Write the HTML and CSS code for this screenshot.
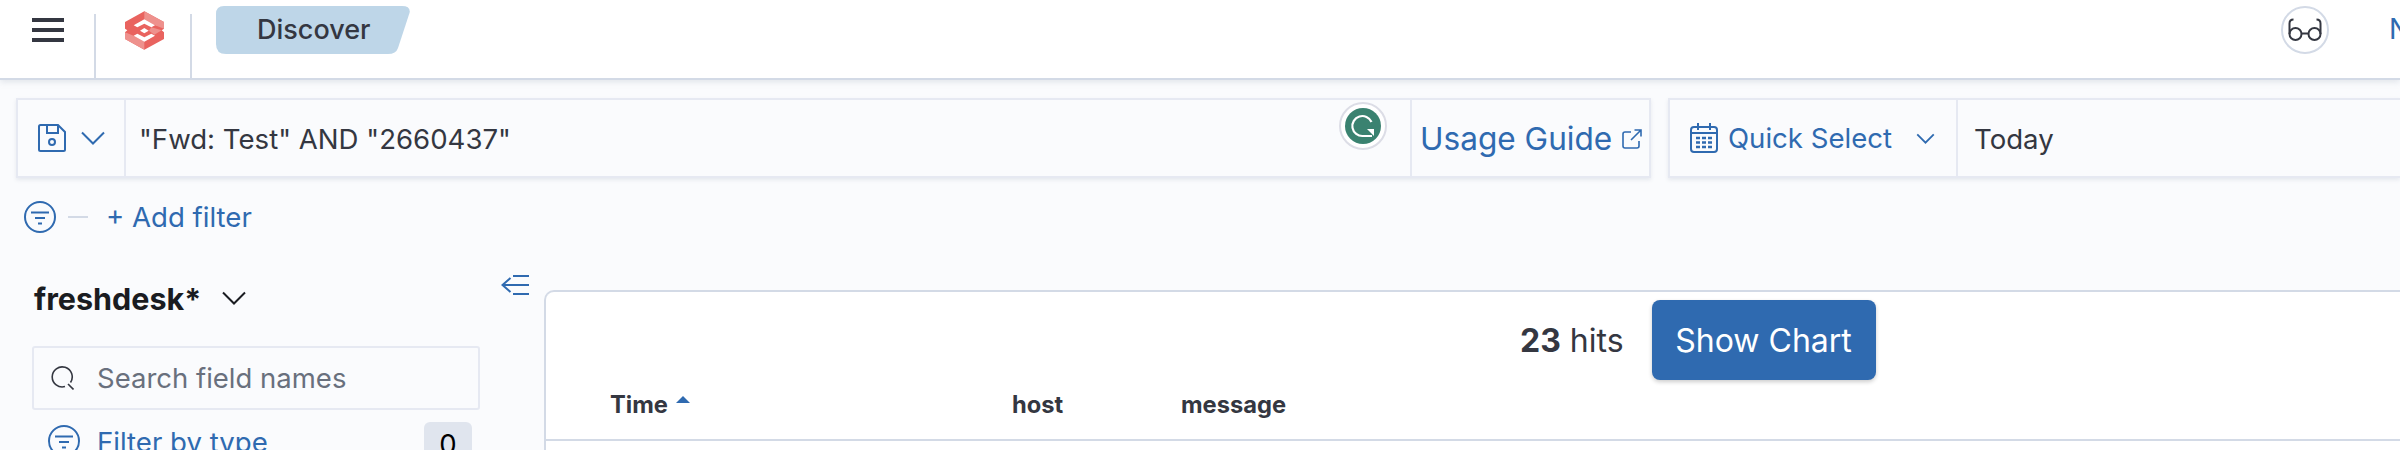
FILE: index.html
```html
<!DOCTYPE html>
<html lang="en">

<head>
    <meta charset="UTF-8">
    <meta name="viewport" content="width=device-width, initial-scale=1.0">
    <title>Discover</title>
    <link rel="stylesheet" href="styles.css">
</head>

<body>
    <header class="topbar">
        <div class="nav-cell">
            <div class="burger"><span></span><span></span><span></span></div>
        </div>
        <div class="logo-cell">
            <svg class="logo" viewBox="0 0 117 115">
                <path fill="#e9635f" d="M58 0 117 32V52L110 57 117 63V83L58 115 0 83V63L7 57 0 52V32Z"/>
                <path fill="#ee918d" d="M58 0 117 32V52L90 42 58 24Z"/>
                <path fill="#ee918d" d="M0 63 26 73 58 91V115L0 83Z"/>
                <path fill="#ee918d" d="M79 48 110 57 88 70 72 58Z"/>
                <path fill="#fff" d="M58 24 90 42 79 48 58 37 37 48 26 42Z"/>
                <path fill="#fff" d="M58 91 90 73 79 67 58 78 37 67 26 73Z"/>
                <path fill="#fff" d="M58 50 71 58 58 66 45 58Z"/>
            </svg>
        </div>
        <div class="crumb">Discover</div>
        <div class="header-end">
            <div class="avatar">
                <svg viewBox="0 0 34 24" width="34" height="24" fill="none" stroke="#343741" stroke-width="2">
                    <circle cx="7.5" cy="16" r="6"/>
                    <circle cx="26.5" cy="16" r="6"/>
                    <path d="M13.5 15.500h7M1.500 16V5.500C1.500 3 3 1.500 5.500 1.500M32.500 16V5.500C32.500 3 31 1.500 28.500 1.500"/>
                </svg>
            </div>
            <a class="user-link">N</a>
        </div>
    </header>

    <div class="query-row">
        <div class="query-box">
            <div class="save-cell">
                <svg viewBox="0 0 28 28" width="28" height="28" fill="none" stroke="#2f6ab0" stroke-width="2">
                    <path d="M1 2.500a1.500 1.500 0 0 1 1.500-1.500h17.500l7 7v17.500a1.500 1.500 0 0 1-1.500 1.500H2.500A1.500 1.500 0 0 1 1 25.500Z"/>
                    <path d="M9 1v8h11V1"/>
                    <circle cx="14" cy="18" r="3"/>
                </svg>
                <svg class="chevron" viewBox="0 0 24 14" width="24" height="14" fill="none" stroke="#2f6ab0" stroke-width="2">
                    <path d="M1 1.500 12 12.500 23 1.500"/>
                </svg>
            </div>
            <div class="query-text">"Fwd: Test" AND "2660437"</div>
            <div class="grammarly">
                <svg viewBox="0 0 36 36" width="36" height="36">
                    <circle cx="18" cy="18" r="18" fill="#3a8270"/>
                    <path d="M26.500 14A10 10 0 1 0 18 28H27" fill="none" stroke="#fff" stroke-width="2.200"/>
                    <path d="M22 21H29V28Z" fill="#fff"/>
                </svg>
            </div>
            <div class="guide-cell">
                <a class="guide-link">Usage Guide</a>
                <svg viewBox="0 0 20 20" width="20" height="20" fill="none" stroke="#2f6ab0" stroke-width="1.600">
                    <path d="M9 3H3a2 2 0 0 0-2 2v12a2 2 0 0 0 2 2h12a2 2 0 0 0 2-2v-5M9 11 19 1M12.500 1H19V7.500"/>
                </svg>
            </div>
        </div>
        <div class="date-box">
            <div class="quick-cell">
                <svg viewBox="0 0 28 30" width="28" height="30" fill="none" stroke="#2f6ab0" stroke-width="2">
                    <rect x="1" y="4" width="26" height="25" rx="3"/>
                    <path d="M1 10H27M8 0V7M20 0V7"/>
                    <path stroke-width="2.500" stroke-dasharray="4 2" d="M6 15H23M6 19.500H23M6 24H23"/>
                </svg>
                <a class="quick-link">Quick Select</a>
                <svg class="chevron" viewBox="0 0 20 12" width="19" height="11" fill="none" stroke="#2f6ab0" stroke-width="2">
                    <path d="M1 1.500 10 10.500 19 1.500"/>
                </svg>
            </div>
            <div class="date-value">Today</div>
        </div>
    </div>

    <div class="filter-row">
        <svg class="filter-icon" viewBox="0 0 32 32" width="32" height="32" fill="none" stroke="#2f6ab0" stroke-width="2">
            <circle cx="16" cy="16" r="15"/>
            <path d="M7 11.500H25M11 17H21M14 22.500H18"/>
        </svg>
        <span class="dash"></span>
        <a class="add-filter">+ Add filter</a>
    </div>

    <div class="content">
        <aside class="sidebar">
            <div class="index-row">
                <span class="index-name">freshdesk*</span>
                <svg viewBox="0 0 24 14" width="24" height="14" fill="none" stroke="#1a1c21" stroke-width="2">
                    <path d="M1 1.500 12 12.500 23 1.500"/>
                </svg>
                <svg class="collapse" viewBox="0 0 28 20" width="28" height="20" fill="none" stroke="#2f6ab0" stroke-width="2">
                    <path d="M12 1H28M3 10H28M12 19H28M9.500 3 1.500 10 9.500 17"/>
                </svg>
            </div>
            <div class="field-search">
                <svg viewBox="0 0 24 24" width="24" height="24" fill="none" stroke="#343741" stroke-width="1.600">
                    <path d="M15 20.500A10 10 0 1 1 20.500 16.500"/>
                    <path d="M18 18 23.500 23.500"/>
                </svg>
                <span>Search field names</span>
            </div>
            <div class="filter-type">
                <svg viewBox="0 0 32 32" width="32" height="32" fill="none" stroke="#2f6ab0" stroke-width="2">
                    <circle cx="16" cy="16" r="15"/>
                    <path d="M7 11.500H25M11 17H21M14 22.500H18"/>
                </svg>
                <a>Filter by type</a>
                <span class="badge">0</span>
            </div>
        </aside>

        <main class="results">
            <div class="hits-row">
                <span class="hits"><b>23</b> hits</span>
                <button class="chart-btn">Show Chart</button>
            </div>
            <div class="table-head">
                <span class="col col-time">Time<i class="sort-up"></i></span>
                <span class="col col-host">host</span>
                <span class="col">message</span>
            </div>
        </main>
    </div>
</body>

</html>
```

FILE: styles.css
```css
* {
    margin: 0;
    padding: 0;
    box-sizing: border-box;
}

body {
    width: 2400px;
    height: 450px;
    overflow: hidden;
    background: #fafbfd;
    font-family: 'Inter', 'Liberation Sans', sans-serif;
    color: #343741;
}

svg {
    display: block;
    flex: none;
}

.topbar {
    display: flex;
    height: 80px;
    background: #ffffff;
    border-bottom: 2px solid #d3dae6;
    box-shadow: 0 2px 6px rgba(152, 162, 179, 0.25);
}

.nav-cell {
    width: 96px;
    margin-top: 14px;
    border-right: 2px solid #d3dae6;
    padding: 4px 0 0 32px;
}

.burger {
    display: flex;
    flex-direction: column;
    gap: 6px;
    width: 32px;
}

.burger span {
    height: 4px;
    background: #343741;
}

.logo-cell {
    width: 96px;
    margin-top: 14px;
    border-right: 2px solid #d3dae6;
    padding: 0 0 0 29px;
}

.logo {
    width: 39px;
    height: 39px;
    margin-top: -3px;
}

.crumb {
    width: 194px;
    height: 48px;
    margin: 6px 0 0 24px;
    padding-left: 41px;
    background: #bed6e8;
    font-size: 27px;
    font-weight: 500;
    line-height: 48px;
    clip-path: path("M8 0H186Q195 0 193.500 7L182 42Q180 48 172 48H10Q0 48 0 38V8Q0 0 8 0Z");
}

.header-end {
    display: flex;
    align-items: flex-start;
    margin-left: auto;
}

.avatar {
    display: flex;
    align-items: center;
    justify-content: center;
    width: 48px;
    height: 48px;
    margin-top: 6px;
    border: 2px solid #d3dae6;
    border-radius: 50%;
}

.user-link {
    width: 11px;
    margin-left: 60px;
    overflow: hidden;
    color: #2f6ab0;
    font-size: 28px;
    line-height: 58px;
}

.query-row {
    display: flex;
    gap: 17px;
    padding: 18px 0 0 16px;
}

.query-box,
.date-box {
    display: flex;
    height: 80px;
    border: 2px solid #e6e9f2;
    box-shadow: 0 2px 4px rgba(152, 162, 179, 0.2);
    font-size: 27.6px;
}

.query-box {
    width: 1635px;
    flex: none;
}

.save-cell {
    display: flex;
    align-items: center;
    gap: 15px;
    width: 108px;
    padding-left: 20px;
    border-right: 2px solid #e6e9f2;
}

.query-text {
    flex: 1;
    padding-left: 13px;
    line-height: 79px;
}

.grammarly {
    display: flex;
    align-items: center;
    justify-content: center;
    width: 48px;
    height: 48px;
    margin: 2px 23px 0 0;
    background: #ffffff;
    border: 2px solid #dcdde6;
    border-radius: 50%;
}

.guide-cell {
    display: flex;
    align-items: center;
    gap: 10px;
    width: 239px;
    padding-left: 8px;
    border-left: 2px solid #e6e9f2;
    color: #2f6ab0;
    font-size: 31.6px;
}

.guide-cell svg {
    margin-top: 2px;
}

.date-box {
    flex: 1;
    border-right: none;
}

.quick-cell {
    display: flex;
    align-items: center;
    width: 288px;
    padding-left: 20px;
    border-right: 2px solid #e6e9f2;
    color: #2f6ab0;
}

.quick-link {
    margin-left: 10px;
}

.quick-cell .chevron {
    margin-left: 24px;
}

.date-value {
    padding-left: 16px;
    line-height: 78px;
}

.filter-row {
    display: flex;
    align-items: center;
    height: 42px;
    margin-top: 18px;
    padding-left: 24px;
    color: #2f6ab0;
    font-size: 27.6px;
}

.dash {
    width: 20px;
    height: 2px;
    margin: 0 18px 0 12px;
    background: #d3dae6;
}

.content {
    display: flex;
    height: 212px;
    padding-top: 16px;
    overflow: hidden;
}

.sidebar {
    width: 544px;
    flex: none;
    padding: 0 0 0 32px;
}

.index-row {
    display: flex;
    align-items: center;
    gap: 21px;
    height: 50px;
    margin-top: 19px;
    padding-left: 2px;
    color: #1a1c21;
}

.index-name {
    font-size: 30.5px;
    font-weight: 700;
}

.collapse {
    margin: -26px 0 0 234px;
}

.field-search {
    display: flex;
    align-items: center;
    gap: 23px;
    width: 448px;
    height: 64px;
    margin-top: 23px;
    padding-left: 16px;
    border: 2px solid #e6e9f2;
    border-radius: 3px;
    color: #69707d;
    font-size: 27.5px;
}

.filter-type {
    display: flex;
    gap: 17px;
    align-items: flex-start;
    width: 448px;
    margin-top: 15px;
    padding: 0 8px 0 16px;
    color: #2f6ab0;
    font-size: 27.6px;
    line-height: 34px;
}

.badge {
    width: 48px;
    height: 40px;
    margin: -3px 0 0 auto;
    background: #e0e5ee;
    border-radius: 6px;
    color: #000000;
    text-align: center;
    line-height: 44px;
}

.results {
    flex: 1;
    height: 160px;
    margin-top: 36px;
    background: #ffffff;
    border: 2px solid #d3dae6;
    border-right: none;
    border-bottom: none;
    border-top-left-radius: 10px;
}

.hits-row {
    display: flex;
    align-items: center;
    gap: 28px;
    height: 80px;
    margin-top: 8px;
    padding-left: 974px;
}

.hits {
    font-size: 32px;
}

.chart-btn {
    width: 224px;
    height: 80px;
    background: #2f6ab0;
    border: none;
    border-radius: 8px;
    box-shadow: 0 2px 4px rgba(0, 0, 0, 0.2);
    color: #ffffff;
    font-family: inherit;
    font-size: 32px;
}

.table-head {
    display: flex;
    height: 61px;
    padding: 2px 0 0 64px;
    border-bottom: 2px solid #d3dae6;
    font-size: 23.7px;
    font-weight: 700;
    line-height: 46px;
}

.col-time {
    position: relative;
    width: 402px;
}

.sort-up {
    position: absolute;
    top: 14px;
    left: 66px;
    border: 7px solid transparent;
    border-top: none;
    border-bottom: 7px solid #2f6ab0;
}

.col-host {
    width: 169px;
}
```
